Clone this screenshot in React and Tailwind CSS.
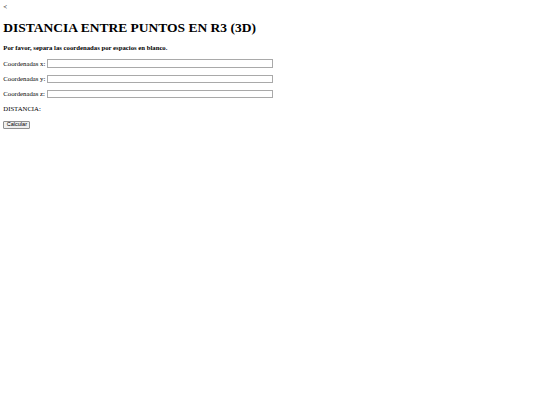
export default function App() {
  const rows = ["x", "y", "z"];
  return (
    <div className="m-[3.3px] font-['Liberation_Serif',serif] text-[6.72px] leading-[1.15] text-black">
      <div>&lt;</div>
      <h1 className="text-[13.5px] font-bold my-[8.6px]">DISTANCIA ENTRE PUNTOS EN R3 (3D)</h1>
      <h4 className="text-[6.72px] font-bold mt-[8.8px] mb-[7.8px]">Por favor, separa las coordenadas por espacios en blanco.</h4>
      {rows.map((r) => (
        <div key={r} className="my-[6.6px] flex items-center">
          <span>Coordenadas {r}:</span>
          <input className="ml-[1.7px] w-[226px] h-[8.6px] border border-[#a9a9a9] bg-white outline-none" />
        </div>
      ))}
      <div className="mt-[6.4px] mb-[7.2px]">DISTANCIA:</div>
      <button className="font-['Liberation_Sans',sans-serif] text-[5.5px] leading-none h-[8px] px-[2.5px] border border-[#8f8f8f] rounded-[1px] bg-[#efefef]">Calcular</button>
    </div>
  );
}
